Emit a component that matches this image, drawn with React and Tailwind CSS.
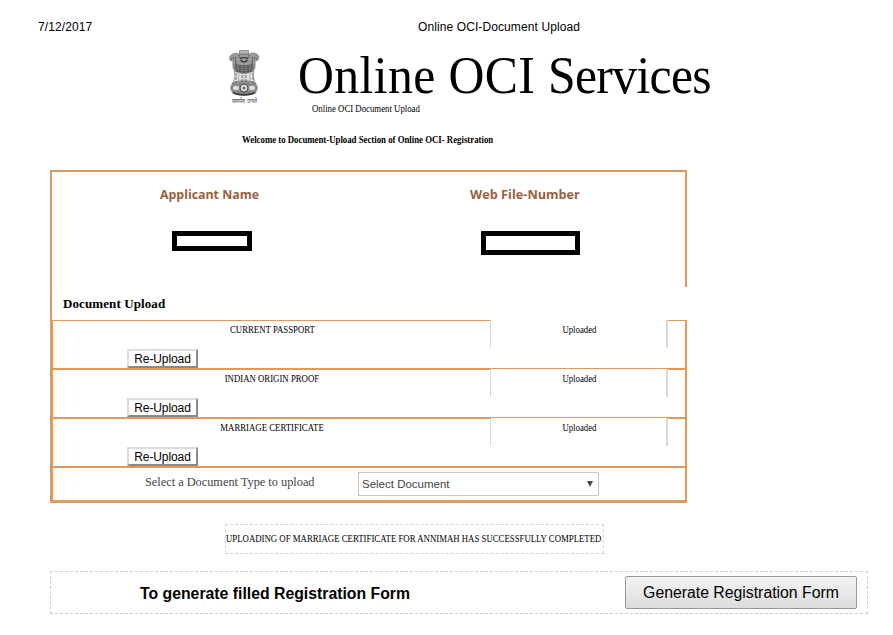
const documents = ["CURRENT PASSPORT", "INDIAN ORIGIN PROOF", "MARRIAGE CERTIFICATE"];

export default function App() {
  return (
    <div className="w-[893px] h-[635px] bg-white text-black overflow-hidden font-['Liberation_Serif',serif]">
      <div className="flex h-[44px] pl-[38px] pt-[19px] font-['Liberation_Sans',sans-serif] text-[12px] leading-4 tracking-[0.1px]">
        <span className="w-[380px]">7/12/2017</span>
        <span className="whitespace-nowrap">Online OCI-Document Upload</span>
      </div>

      <header className="flex h-[76px] pl-[226px]">
        <div className="w-[72px] pt-[5px]">
          <Emblem />
        </div>
        <div className="flex flex-col items-start">
          <h1 className="h-[59px] leading-[64px] text-[52px] tracking-[0.4px] whitespace-nowrap origin-left scale-x-[0.956]">
            Online OCI <span className="tracking-[-0.7px]">Services</span>
          </h1>
          <p className="pl-[14px] text-[10px] leading-3 whitespace-nowrap">
            <Narrow>Online OCI Document Upload</Narrow>
          </p>
        </div>
      </header>
      <p className="h-[50px] pl-[242px] pt-[14px] text-[10px] leading-3 font-bold whitespace-nowrap">
        <Narrow>Welcome to Document-Upload Section of Online OCI- Registration</Narrow>
      </p>

      <main className="ml-[50px] w-[637px]">
        <section className="flex h-[117px] border-2 border-b-0 border-[#dd9a5c]">
          <Field
            label="Applicant Name"
            className="w-[310px] ml-[108px]"
            text="scale-x-[0.95]"
            box="w-[80px] h-[20px] ml-3"
          />
          <Field
            label="Web File-Number"
            className=""
            text="scale-x-[0.977]"
            box="w-[99px] h-[24px] ml-[11px]"
          />
        </section>
        <h2 className="h-[33px] border-l-2 border-[#dd9a5c] pl-[11px] pt-[9px] text-[13px] leading-4 font-bold tracking-[0.1px]">
          Document Upload
        </h2>
        <section className="border-l-3 border-r-2 border-b-3 border-[#dd9a5c]">
          {documents.map((name, i) => (
            <DocumentRow key={name} name={name} first={i === 0} />
          ))}
          <div className="flex h-[34px] border-t-2 border-[#dd9a5c] text-[#444]">
            <label className="w-[305px] pl-[92px] pt-[6px] text-[13px] leading-4 whitespace-nowrap">
              <span className="inline-block origin-left scale-x-[0.947]">
                Select a Document Type to upload
              </span>
            </label>
            <div className="mt-[4px] flex h-[24px] w-[241px] items-center justify-between border border-[#c8c8c8] pl-[3px] pr-[5px] font-['Liberation_Sans',sans-serif] text-[11.5px]">
              <span className="pt-px">Select Document</span>
              <svg className="w-[6px] h-[6px]" viewBox="0 0 6 6" fill="#444">
                <path d="M0 0h6L3 6z" />
              </svg>
            </div>
          </div>
        </section>
      </main>

      <div className="ml-[225px] mt-[21px] flex h-[30px] w-[379px] items-center border border-dashed border-[#d5d5d5] pb-px text-[10px] whitespace-nowrap">
        <Narrow>UPLOADING OF MARRIAGE CERTIFICATE FOR ANNIMAH HAS SUCCESSFULLY COMPLETED</Narrow>
      </div>

      <footer className="ml-[50px] mt-[17px] flex h-[43px] w-[818px] border border-dashed border-[#cfcfcf] font-['Liberation_Sans',sans-serif] text-[15.8px]">
        <span className="w-[574px] pl-[89px] pt-[10px] leading-6 font-bold">
          To generate filled Registration Form
        </span>
        <button className="mt-[4px] h-[33px] w-[232px] rounded-[2px] border border-[#999] bg-linear-to-b from-[#f4f4f4] to-[#dcdcdc] whitespace-nowrap">
          Generate Registration Form
        </button>
      </footer>
    </div>
  );
}

function Narrow({ children, center }) {
  return (
    <span className={`inline-block scale-x-[0.877] ${center ? "origin-center" : "origin-left"}`}>
      {children}
    </span>
  );
}

function Field({ label, className, text, box }) {
  return (
    <div className={className}>
      <div className="pt-[12px] font-['Open_Sans','Noto_Sans',sans-serif] text-[13px] leading-5 font-bold text-[#97623f]">
        <span className={`inline-block origin-left ${text}`}>{label}</span>
      </div>
      <div className={`mt-[27px] border-5 border-black ${box}`} />
    </div>
  );
}

function DocumentRow({ name, first }) {
  return (
    <div
      className={`flex border-[#dd9a5c] ${first ? "h-[48px] border-t" : "h-[49px] border-t-2"}`}
    >
      <div className="w-[437px]">
        <div className="pl-px pt-[3px] text-center text-[10px] leading-3">
          <Narrow center>{name}</Narrow>
        </div>
        <button className="block ml-[74px] mt-[13px] h-[19px] w-[71px] border-2 border-t-[#dcdcdc] border-l-[#dcdcdc] border-r-[#8a8a8a] border-b-[#8a8a8a] font-['Liberation_Sans',sans-serif] text-[12px] leading-[16px] tracking-[-0.1px] whitespace-nowrap">
          Re-Upload
        </button>
      </div>
      <div className="-mt-px h-[28px] w-[178px] border-l border-r-2 border-[#d8d8d8] bg-white pl-px pt-[4px] text-center text-[10px] leading-3">
        <Narrow center>Uploaded</Narrow>
      </div>
    </div>
  );
}

// lion capital with the motto underneath
function Emblem() {
  return (
    <svg className="w-[36px] h-[58px] overflow-visible" viewBox="0 0 36 58">
      <g stroke="#777" strokeWidth=".7">
        <path d="M8 22h20c-2 5 0 9 2 13H6c2-4 4-8 2-13z" fill="#e2e2e2" />
        <path d="M13 5C9 3 4 5 3.500 9c0 3 2 3 3.500 3 0 4-1 8 3 11h16c4-3 3-7 3-11 2 0 4-1 4-4-1-4-6-5-10-3z" fill="#9a9a9a" />
        <path d="M13.500 1.500h9V5h-9z" fill="#b5b5b5" />
        <path d="M7 34c5-3 17-3 22 0 3 3 3 7 0 10-5 3-17 3-22 0-3-3-3-7 0-10z" fill="#8a8a8a" />
      </g>
      <path d="M9 14c4 3 14 3 18 0 1 4 0 7-2 9-5 2-9 2-14 0-2-2-3-5-2-9z" fill="#555" opacity=".8" />
      <g fill="none" stroke="#3c3c3c" strokeWidth=".9">
        <path d="M14 9.500c2-1 6-1 8 0M14.500 11c2 2.500 5 2.500 7 0" strokeWidth="1.500" />
        <path d="M9 8l1 6M27 8l-1 6M5 10l3-1M31 10l-3-1M13 6v3M23 6v3" strokeDasharray="1.500 .8" />
        <path d="M11 16l2 5M25 16l-2 5M16 15v7M20 15v7" stroke="#aaa" strokeDasharray="1 1" />
        <path d="M10 24v10M16 22v12M20 22v12M27 24v10" stroke="#666" strokeDasharray="3 1" />
        <path d="M13 23l-1 11M23.500 23l1 11M18 24v9" stroke="#aaa" />
        <path d="M7 43.500c5 3 17 3 22 0" strokeWidth="1.800" />
      </g>
      <ellipse cx="10" cy="39" rx="3" ry="2.200" fill="#ddd" />
      <ellipse cx="26" cy="39" rx="3" ry="2.200" fill="#ddd" />
      <circle cx="18" cy="39" r="4" fill="#ddd" stroke="#444" />
      <circle cx="18" cy="39" r="1.600" fill="#777" />
      <text x="5.500" y="53.500" fontSize="6.500" textLength="25.500" lengthAdjust="spacingAndGlyphs" fill="#444">
        सत्यमेव जयते
      </text>
    </svg>
  );
}
